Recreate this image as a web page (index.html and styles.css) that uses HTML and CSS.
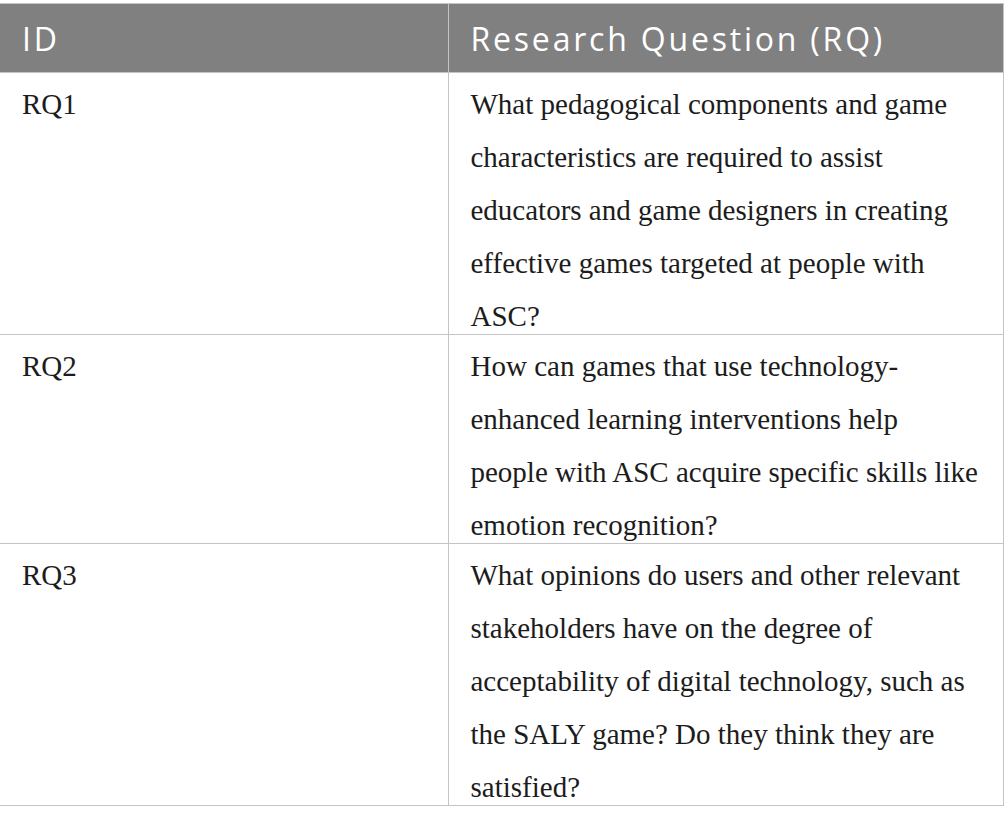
FILE: index.html
```html
<!DOCTYPE html>
<html lang="en">
<head>
<meta charset="utf-8">
<title>Research Questions</title>
<link rel="stylesheet" href="styles.css">
</head>
<body>
<table class="rq-table">
  <thead>
    <tr>
      <th class="col-id">ID</th>
      <th class="col-q">Research Question (RQ)</th>
    </tr>
  </thead>
  <tbody>
    <tr>
      <td><div class="cell">RQ1</div></td>
      <td><div class="cell">What pedagogical components and game characteristics are required to assist educators and game designers in creating effective games targeted at people with ASC?</div></td>
    </tr>
    <tr>
      <td><div class="cell">RQ2</div></td>
      <td><div class="cell">How can games that use technology-enhanced learning interventions help people&nbsp;with ASC acquire specific skills like emotion recognition?</div></td>
    </tr>
    <tr>
      <td><div class="cell">RQ3</div></td>
      <td><div class="cell">What opinions do users and other relevant stakeholders have on the degree of acceptability of digital technology, such as the SALY game? Do they think they are satisfied?</div></td>
    </tr>
  </tbody>
</table>
</body>
</html>
```
FILE: styles.css
```css
html, body {
  margin: 0;
  padding: 0;
  background: #ffffff;
}
body {
  padding: 3px 1px 0 0;
}
.rq-table {
  width: 1004px;
  border-collapse: collapse;
  table-layout: fixed;
}
.rq-table th {
  background: #808080;
  color: #ffffff;
  font-family: "Open Sans", "Noto Sans", sans-serif;
  font-weight: 400;
  font-size: 32px;
  letter-spacing: 2.8px;
  text-align: left;
  height: 68px;
  padding: 0 10px 0 22px;
  border: 1px solid #c4c4c4;
  border-left: none;
  vertical-align: middle;
  white-space: nowrap;
}
.rq-table .col-id { width: 448px; box-sizing: border-box; }
.rq-table td {
  font-family: "Liberation Serif", "DejaVu Serif", serif;
  font-size: 29px;
  line-height: 53px;
  color: #1c1c1c;
  padding: 5px 12px 0 22px;
  border: 1px solid #c4c4c4;
  border-left: none;
  vertical-align: top;
}
.rq-table .cell {
  margin-bottom: -9px;
}
```
